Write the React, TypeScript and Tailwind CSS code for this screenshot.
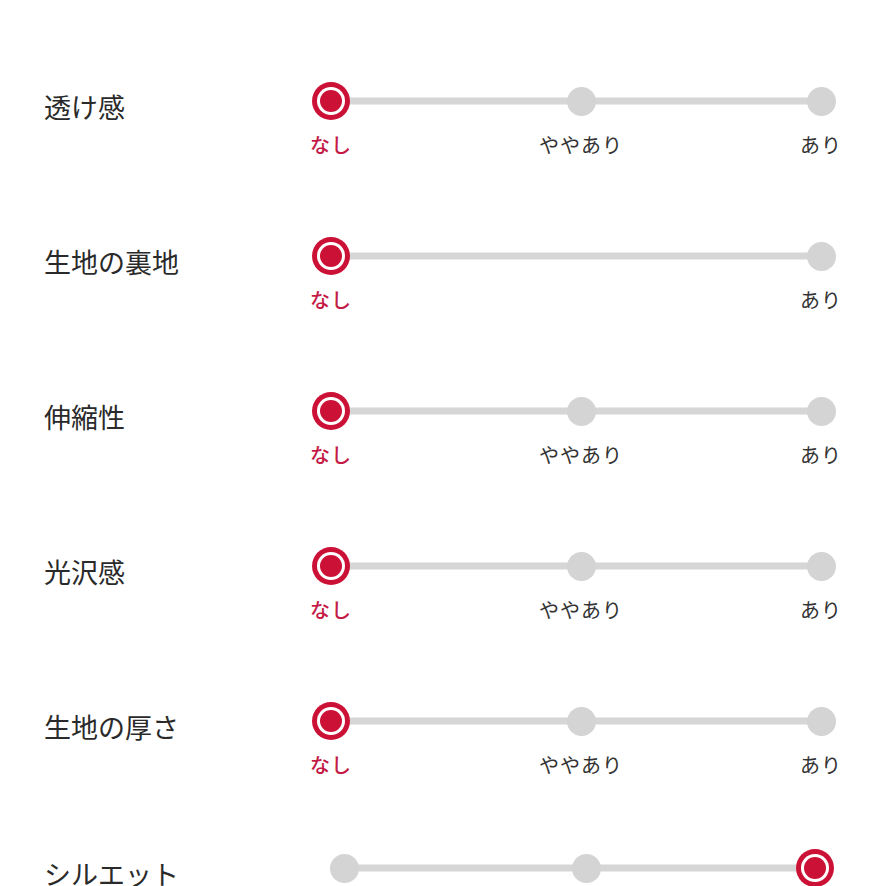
import type { FC } from "react";

interface Attribute {
  id: string;
  label: string;
  stops: string[];
  selected: number;
  // the last slider sits a touch narrower in the layout
  compact?: boolean;
}

const attributes: Attribute[] = [
  { id: "sheer", label: "透け感", stops: ["なし", "ややあり", "あり"], selected: 0 },
  { id: "lining", label: "生地の裏地", stops: ["なし", "あり"], selected: 0 },
  { id: "stretch", label: "伸縮性", stops: ["なし", "ややあり", "あり"], selected: 0 },
  { id: "gloss", label: "光沢感", stops: ["なし", "ややあり", "あり"], selected: 0 },
  { id: "thickness", label: "生地の厚さ", stops: ["なし", "ややあり", "あり"], selected: 0 },
  { id: "silhouette", label: "シルエット", stops: ["タイト", "ふつう", "ゆったり"], selected: 2, compact: true },
];

const Marker: FC<{ active: boolean }> = ({ active }) =>
  active ? (
    <div className="w-[38px] h-[38px] rounded-full bg-[#cc1136] flex items-center justify-center">
      <div className="w-[28px] h-[28px] rounded-full bg-white flex items-center justify-center">
        <div className="w-[22px] h-[22px] rounded-full bg-[#cc1136]" />
      </div>
    </div>
  ) : (
    <div className="w-[29px] h-[29px] rounded-full bg-[#d4d4d4]" />
  );

const AttributeRow: FC<{ item: Attribute }> = ({ item }) => {
  // middle stop sits a little right of centre
  const cellCls = (i: number) => {
    const mid = i > 0 && i < item.stops.length - 1;
    if (!mid) return "w-10";
    return item.compact ? "w-10 ml-[13px]" : "w-10 ml-[10px]";
  };

  return (
    <div className="flex items-start">
      <div className="w-[311px] pl-11 pt-[6px] text-[27px] leading-[40px] text-[#2a2a2a]">
        {item.label}
      </div>

      <div className={item.compact ? "w-[530px] pl-[13px] pr-[6px]" : "w-[530px]"}>
        {/* track + stops */}
        <div className="relative h-10 flex items-center justify-between">
          <div className="absolute left-5 right-5 top-1/2 -translate-y-1/2 h-[7px] bg-[#d6d6d6]" />
          {item.stops.map((s, i) => (
            <div key={s} className={`relative h-10 flex items-center justify-center ${cellCls(i)}`}>
              <Marker active={i === item.selected} />
            </div>
          ))}
        </div>

        {/* stop captions */}
        <div className="mt-[10px] h-7 flex justify-between">
          {item.stops.map((s, i) => (
            <div
              key={s}
              className={`flex justify-center whitespace-nowrap text-[20px] leading-7 tracking-[1px] ${cellCls(i)} ${
                i === item.selected ? "font-medium text-[#c41a45]" : "text-[#333]"
              }`}
            >
              {s}
            </div>
          ))}
        </div>
      </div>
    </div>
  );
};

export default function App() {
  return (
    <div
      className="w-[886px] h-[886px] overflow-hidden bg-white pt-[81px] flex flex-col gap-[77px]"
      style={{ fontFamily: '"Noto Sans CJK JP", "Noto Sans", sans-serif' }}
    >
      {attributes.map((a) => (
        <div key={a.id} className="last:-mt-[8px]">
          <AttributeRow item={a} />
        </div>
      ))}
    </div>
  );
}
